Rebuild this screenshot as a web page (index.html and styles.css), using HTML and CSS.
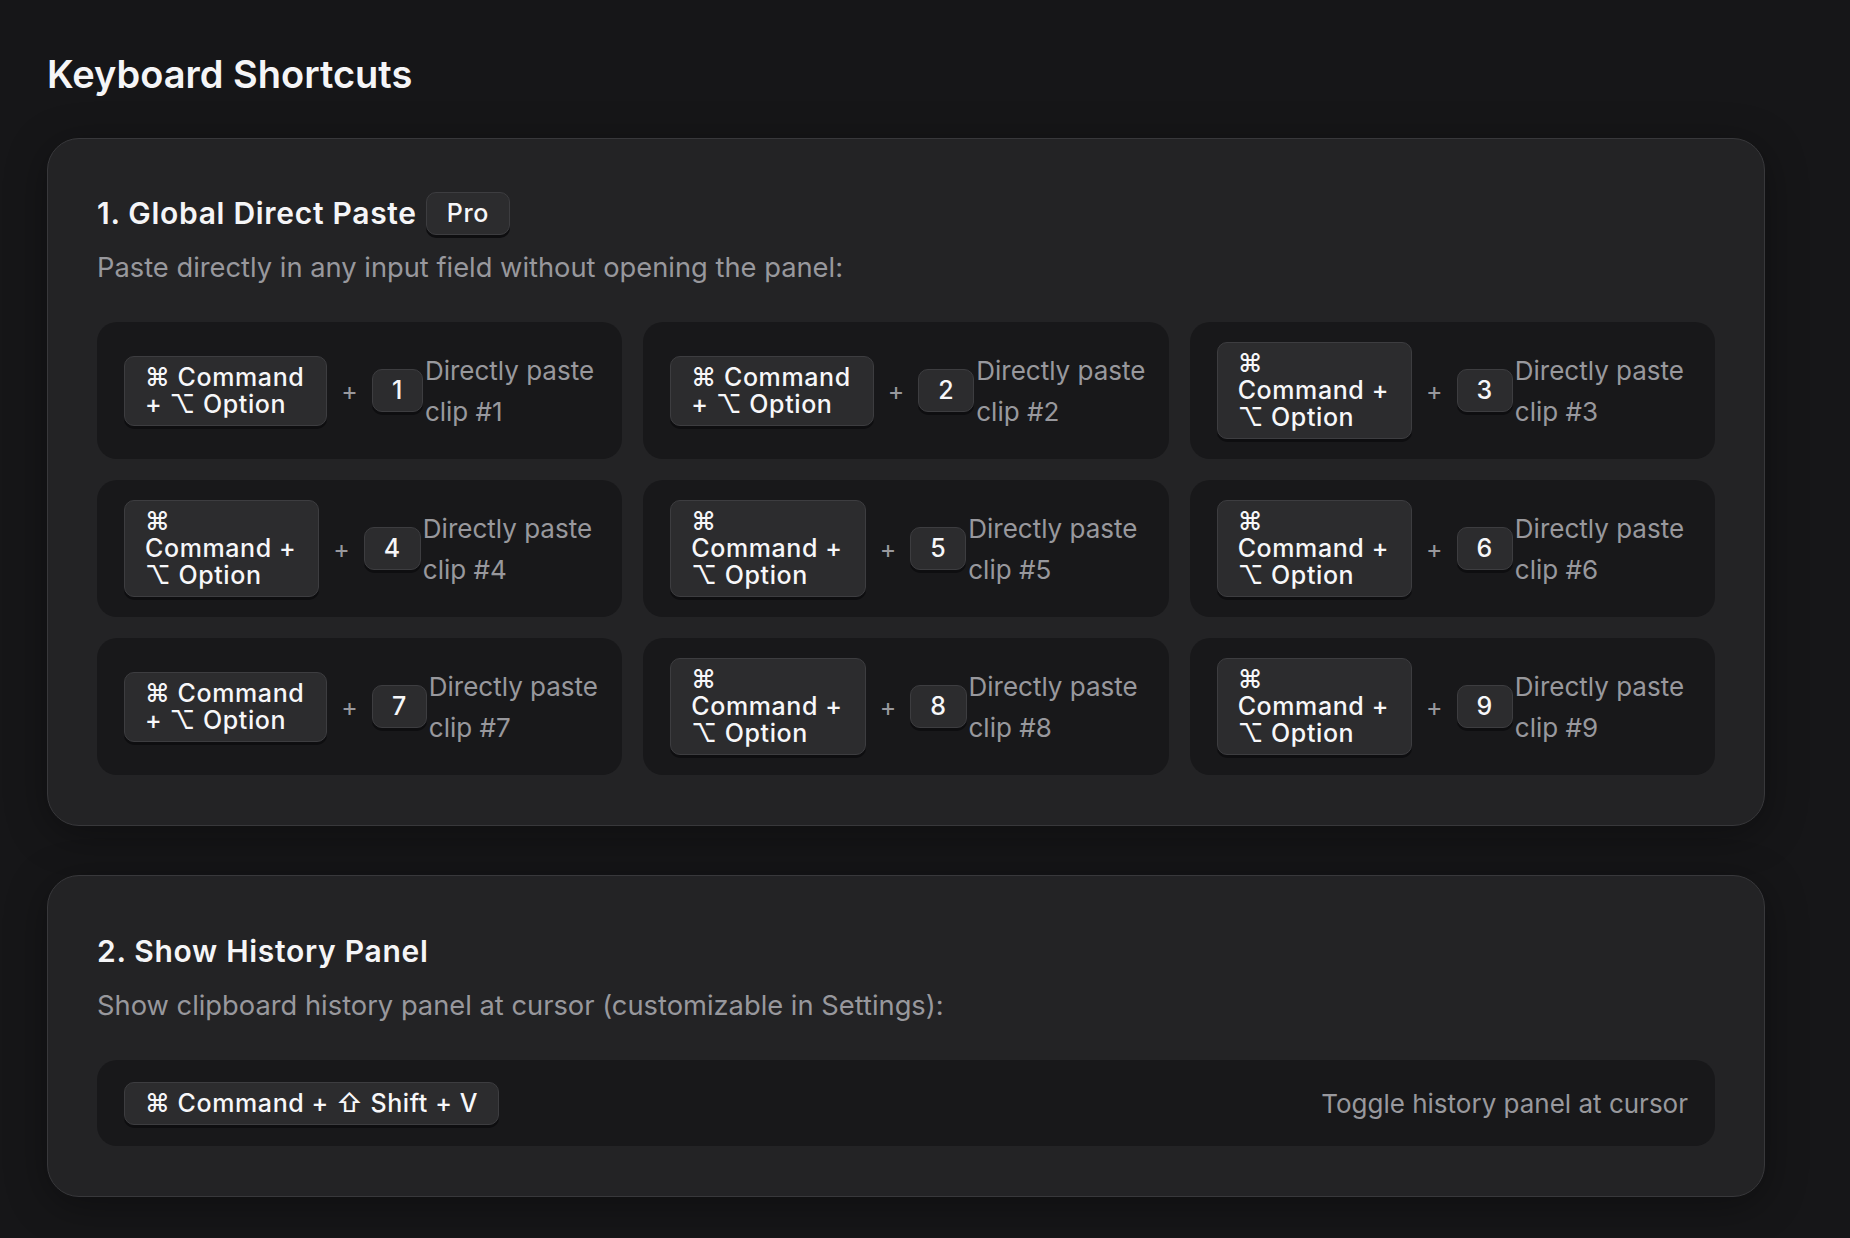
FILE: index.html
```html
<!DOCTYPE html>
<html lang="en">
<head>
<meta charset="utf-8">
<title>Keyboard Shortcuts</title>
<link rel="stylesheet" href="styles.css">
</head>
<body>
<main class="page">
  <h1 class="title">Keyboard Shortcuts</h1>

  <section class="card">
    <div class="card-head">
      <h2 class="card-title">1. Global Direct Paste</h2>
      <span class="key badge">Pro</span>
    </div>
    <p class="desc">Paste directly in any input field without opening the panel:</p>
    <div class="grid">
      <div class="item">
        <div class="combo"><span class="key multi">⌘ Command<br>+ ⌥ Option</span><span class="plus">+</span><span class="key num">1</span></div>
        <div class="label">Directly paste<br>clip #1</div>
      </div>
      <div class="item">
        <div class="combo"><span class="key multi">⌘ Command<br>+ ⌥ Option</span><span class="plus">+</span><span class="key num">2</span></div>
        <div class="label">Directly paste<br>clip #2</div>
      </div>
      <div class="item">
        <div class="combo"><span class="key multi">⌘<br>Command +<br>⌥ Option</span><span class="plus">+</span><span class="key num">3</span></div>
        <div class="label">Directly paste<br>clip #3</div>
      </div>
      <div class="item">
        <div class="combo"><span class="key multi">⌘<br>Command +<br>⌥ Option</span><span class="plus">+</span><span class="key num">4</span></div>
        <div class="label">Directly paste<br>clip #4</div>
      </div>
      <div class="item">
        <div class="combo"><span class="key multi">⌘<br>Command +<br>⌥ Option</span><span class="plus">+</span><span class="key num">5</span></div>
        <div class="label">Directly paste<br>clip #5</div>
      </div>
      <div class="item">
        <div class="combo"><span class="key multi">⌘<br>Command +<br>⌥ Option</span><span class="plus">+</span><span class="key num">6</span></div>
        <div class="label">Directly paste<br>clip #6</div>
      </div>
      <div class="item">
        <div class="combo"><span class="key multi">⌘ Command<br>+ ⌥ Option</span><span class="plus">+</span><span class="key num">7</span></div>
        <div class="label">Directly paste<br>clip #7</div>
      </div>
      <div class="item">
        <div class="combo"><span class="key multi">⌘<br>Command +<br>⌥ Option</span><span class="plus">+</span><span class="key num">8</span></div>
        <div class="label">Directly paste<br>clip #8</div>
      </div>
      <div class="item">
        <div class="combo"><span class="key multi">⌘<br>Command +<br>⌥ Option</span><span class="plus">+</span><span class="key num">9</span></div>
        <div class="label">Directly paste<br>clip #9</div>
      </div>
    </div>
  </section>

  <section class="card">
    <div class="card-head card-head-plain">
      <h2 class="card-title">2. Show History Panel</h2>
    </div>
    <p class="desc">Show clipboard history panel at cursor (customizable in Settings):</p>
    <div class="row-item">
      <span class="key">⌘ Command + ⇧ Shift + V</span>
      <span class="label">Toggle history panel at cursor</span>
    </div>
  </section>
</main>
</body>
</html>
```

FILE: styles.css
```css
* { box-sizing: border-box; }

html, body {
  margin: 0;
  background: #161618;
}

body {
  font-family: Inter, "Noto Sans", "DejaVu Sans", sans-serif;
  color: #f5f5f7;
}

.page {
  padding: 51px 85px 40px 47px;
}

.title {
  margin: 0 0 41px;
  font-size: 38px;
  line-height: 46px;
  font-weight: 600;
  color: #f5f5f7;
}

.card {
  background: #232325;
  border: 1px solid #38383b;
  border-radius: 32px;
  padding: 49px 49px 50px;
  box-shadow: 0 8px 40px rgba(0, 0, 0, 0.35);
}

.card + .card {
  margin-top: 49px;
}

.card-head {
  display: flex;
  align-items: center;
  gap: 9px;
  min-height: 50px;
}

.card-head-plain {
  min-height: 51px;
}

.card-title {
  margin: 0;
  font-size: 30px;
  line-height: 36px;
  font-weight: 600;
  letter-spacing: 0.7px;
}

.desc {
  margin: 12px 0 36px;
  font-size: 27.3px;
  line-height: 36px;
  color: #98989d;
}

.grid {
  display: grid;
  grid-template-columns: repeat(3, 1fr);
  gap: 21px;
}

.item {
  display: flex;
  align-items: center;
  gap: 2px;
  background: #18181a;
  border-radius: 20px;
  padding: 20px 27px;
  min-height: 137px;
  min-width: 0;
}

.combo {
  display: flex;
  align-items: center;
  gap: 14px;
  flex: none;
}

.key {
  display: inline-block;
  padding: 7px 20px;
  font-size: 25px;
  line-height: 27px;
  font-weight: 500;
  letter-spacing: 0.6px;
  color: #f7f7f9;
  background: #2c2c2e;
  border: 1px solid #3d3d40;
  border-radius: 10px;
  box-shadow: 0 3px 0 #0e0e10;
  white-space: nowrap;
}

.multi {
  padding-right: 22px;
}

.num {
  padding: 7px 19px;
}

.plus {
  font-size: 25px;
  color: #98989d;
}

.label {
  flex: none;
  font-size: 26px;
  line-height: 41px;
  color: #98989d;
  white-space: nowrap;
}

.row-item {
  display: flex;
  align-items: center;
  justify-content: space-between;
  min-height: 86px;
  background: #18181a;
  border-radius: 20px;
  padding: 20px 27px;
}
```
